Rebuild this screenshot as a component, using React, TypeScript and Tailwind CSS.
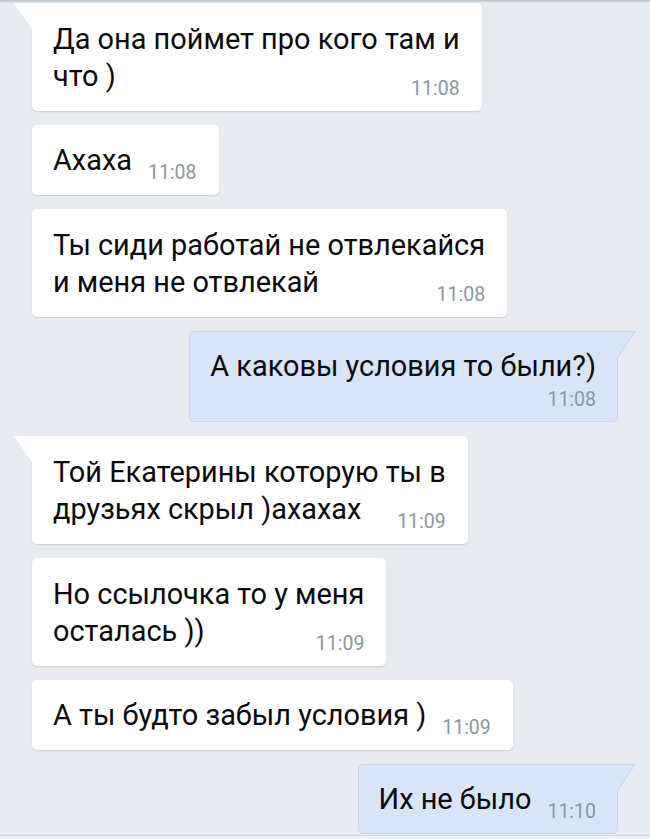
import React from "react";

type Msg = {
  out?: boolean;
  tail?: boolean;
  lines: string[];
  time: string;
  timeBelow?: boolean;
};

const messages: Msg[] = [
  { tail: true, lines: ["Да она поймет про кого там и", "что )"], time: "11:08" },
  { lines: ["Ахаха"], time: "11:08" },
  { lines: ["Ты сиди работай не отвлекайся", "и меня не отвлекай"], time: "11:08" },
  { out: true, tail: true, lines: ["А каковы условия то были?)"], time: "11:08", timeBelow: true },
  { tail: true, lines: ["Той Екатерины которую ты в", "друзьях скрыл )ахахах"], time: "11:09" },
  { lines: ["Но ссылочка то у меня", "осталась ))"], time: "11:09" },
  { lines: ["А ты будто забыл условия )"], time: "11:09" },
  { out: true, tail: true, lines: ["Их не было"], time: "11:10" },
];

function Bubble({ m }: { m: Msg }) {
  const last = m.lines[m.lines.length - 1];
  const rest = m.lines.slice(0, -1);
  const base = m.out
    ? "self-end mr-[32px] bg-[#d7e5f6] border border-[#c7d7eb] pt-[16px] pb-[16px] pl-[20px] pr-[21px]"
    : "self-start ml-[32px] bg-white shadow-[0_1px_1.5px_rgba(0,0,0,0.13)] pt-[17px] pb-[17px] pl-[21px] pr-[22px]";
  const corner = m.tail ? (m.out ? "rounded-tr-none" : "rounded-tl-none") : "";
  return (
    <div className={`relative rounded-[5px] text-[28.9px] text-[#0a0a0a] ${base} ${corner}`}>
      {m.tail && !m.out && (
        <svg className="absolute left-[-18px] top-0" width="18" height="26" viewBox="0 0 18 26">
          <polygon points="0,0 18,0 18,26" fill="#ffffff" />
        </svg>
      )}
      {m.tail && m.out && (
        <svg className="absolute right-[-19px] top-[-1px]" width="19" height="27" viewBox="0 0 19 27">
          <polygon points="0,0 19,0 1,27 0,27" fill="#d7e5f6" />
          <path d="M0 0.5 H18 L0.5 26.5" fill="none" stroke="#c7d7eb" strokeWidth="1" />
        </svg>
      )}
      {rest.map((l, i) => (
        <div key={i} className="leading-[38px] whitespace-pre">
          {l}
        </div>
      ))}
      <div className="flex items-end">
        <span className="leading-[36px] whitespace-pre">{last}</span>
        {!m.timeBelow && (
          <span className="ml-auto pl-[16px] text-[19.5px] leading-[20px] mb-[-5px] text-[#8d96a1]">
            {m.time}
          </span>
        )}
      </div>
      {m.timeBelow && (
        <div className="mt-[6px] mb-[-5px] text-right text-[19.5px] leading-[20px] text-[#8d96a1]">
          {m.time}
        </div>
      )}
    </div>
  );
}

export default function App() {
  return (
    <div className="w-[650px] h-[839px] overflow-hidden bg-[#e8ecf1] flex flex-col font-[Roboto,'Noto_Sans',sans-serif]">
      <div className="h-[3px] shrink-0 bg-gradient-to-b from-[#b9bec4] to-[#e8ecf1]" />
      <div className="flex flex-col gap-[14px]">
        {messages.map((m, i) => (
          <Bubble key={i} m={m} />
        ))}
      </div>
      <div className="mt-[1px] flex-1 border-t border-[#d3d8de] bg-[#eceff3]" />
    </div>
  );
}
